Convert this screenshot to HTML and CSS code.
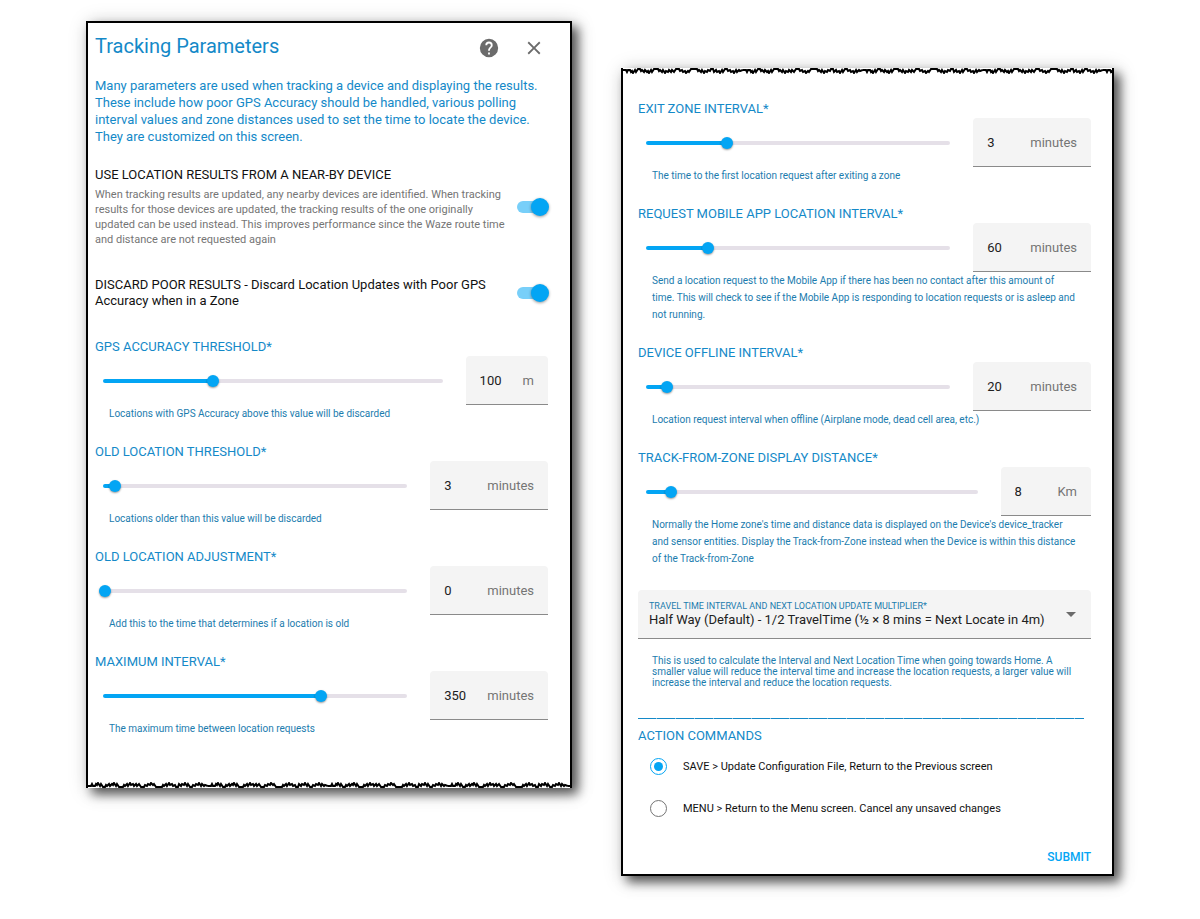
FILE: index.html
```html
<!DOCTYPE html>
<html lang="en">
<head>
<meta charset="utf-8">
<meta name="viewport" content="width=device-width, initial-scale=1">
<title>Tracking Parameters</title>
<link rel="stylesheet" href="styles.css">
</head>
<body>
<form class="page">
  <section class="panel panel-first">
    <header class="head">
      <h1 class="title">Tracking Parameters</h1>
      <button class="icon-btn" type="button" aria-label="Help">
        <svg width="22" height="22" viewBox="0 0 24 24" fill="#6b6b6b"><path d="M15.07 11.25l-.9.92C13.45 12.89 13 13.5 13 15h-2v-.5c0-1.11.45-2.11 1.17-2.83l1.24-1.26c.37-.36.59-.86.59-1.41a2 2 0 0 0-4 0H8a4 4 0 0 1 8 0c0 .88-.36 1.67-.93 2.25M13 19h-2v-2h2M12 2a10 10 0 1 0 0 20 10 10 0 0 0 0-20z"/></svg>
      </button>
      <button class="icon-btn" type="button" aria-label="Close">
        <svg width="22" height="22" viewBox="0 0 24 24" fill="#6b6b6b"><path d="M19 6.41L17.59 5 12 10.59 6.41 5 5 6.41 10.59 12 5 17.59 6.41 19 12 13.41 17.59 19 19 17.59 13.41 12z"/></svg>
      </button>
    </header>
    <p class="intro">Many parameters are used when tracking a device and displaying the results. These include how poor GPS Accuracy should be handled, various polling interval values and zone distances used to set the time to locate the device. They are customized on this screen.</p>

    <div class="toggle">
      <div class="toggle-text">
        <label class="toggle-label" for="nearby">USE LOCATION RESULTS FROM A NEAR-BY DEVICE</label>
        <p class="toggle-desc">When tracking results are updated, any nearby devices are identified. When tracking results for those devices are updated, the tracking results of the one originally updated can be used instead. This improves performance since the Waze route time and distance are not requested again</p>
      </div>
      <input class="switch" type="checkbox" id="nearby" checked>
    </div>
    <div class="toggle">
      <div class="toggle-text">
        <label class="toggle-label" for="discard">DISCARD POOR RESULTS - Discard Location Updates with Poor GPS<br>Accuracy when in a Zone</label>
      </div>
      <input class="switch" type="checkbox" id="discard" checked>
    </div>

    <div class="field">
      <label class="field-label" for="gps">GPS ACCURACY THRESHOLD*</label>
      <div class="row">
        <div class="slider" style="--fill:.3226"><input type="range" aria-label="GPS accuracy threshold" min="0" max="310" value="100"></div>
        <div class="box"><input class="num" id="gps" type="text" value="100"><span class="unit">m</span></div>
      </div>
      <p class="helper">Locations with GPS Accuracy above this value will be discarded</p>
    </div>
    <div class="field">
      <label class="field-label" for="old">OLD LOCATION THRESHOLD*</label>
      <div class="row">
        <div class="slider" style="--fill:.0333"><input type="range" aria-label="Old location threshold" min="0" max="90" value="3"></div>
        <div class="box"><input class="num" id="old" type="text" value="3"><span class="unit">minutes</span></div>
      </div>
      <p class="helper">Locations older than this value will be discarded</p>
    </div>
    <div class="field">
      <label class="field-label" for="adj">OLD LOCATION ADJUSTMENT*</label>
      <div class="row">
        <div class="slider" style="--fill:0"><input type="range" aria-label="Old location adjustment" min="0" max="60" value="0"></div>
        <div class="box"><input class="num" id="adj" type="text" value="0"><span class="unit">minutes</span></div>
      </div>
      <p class="helper">Add this to the time that determines if a location is old</p>
    </div>
    <div class="field">
      <label class="field-label" for="max">MAXIMUM INTERVAL*</label>
      <div class="row">
        <div class="slider" style="--fill:.7204"><input type="range" aria-label="Maximum interval" min="15" max="480" value="350"></div>
        <div class="box"><input class="num" id="max" type="text" value="350"><span class="unit">minutes</span></div>
      </div>
      <p class="helper">The maximum time between location requests</p>
    </div>
    <svg class="torn torn-bottom" width="100%" height="6" aria-hidden="true">
      <defs>
        <pattern id="rip" width="120" height="6" patternUnits="userSpaceOnUse">
          <path fill="none" stroke="#000" stroke-width="2" d="M0 4H3L4 2L5 4H7L8 2L9 3L10 1L12 4L13 2L15 5H17L18 3L19 4L21 2L22 4L24 2L25 3L26 1L28 4L29 2L31 5H35L36 3L37 4L39 2L40 4L42 1L43 3L45 2L46 4L48 2L49 4L51 2L53 5H56L57 3L59 4L60 2L62 3L63 1L65 3L66 2L68 5H74L75 3L76 4L78 2L79 4L81 1L82 3L84 2L85 4L87 3L88 5H90L91 2L93 4L94 2L96 3L97 1L99 4L100 2L102 5H104L105 3L107 4L108 2L110 3L111 1L113 4L114 2L116 4L117 3L120 4"/>
        </pattern>
      </defs>
      <rect width="100%" height="6" fill="url(#rip)"/>
    </svg>
  </section>

  <section class="panel panel-second">
    <svg class="torn torn-top" width="100%" height="6" aria-hidden="true">
      <rect width="100%" height="6" fill="url(#rip)"/>
    </svg>
    <div class="field">
      <label class="field-label" for="exit">EXIT ZONE INTERVAL*</label>
      <div class="row">
        <div class="slider" style="--fill:.2632"><input type="range" aria-label="Exit zone interval" min="0.5" max="10" step="0.5" value="3"></div>
        <div class="box"><input class="num" id="exit" type="text" value="3"><span class="unit">minutes</span></div>
      </div>
      <p class="helper">The time to the first location request after exiting a zone</p>
    </div>
    <div class="field">
      <label class="field-label" for="app">REQUEST MOBILE APP LOCATION INTERVAL*</label>
      <div class="row">
        <div class="slider" style="--fill:.2"><input type="range" aria-label="Request mobile app location interval" min="0" max="300" value="60"></div>
        <div class="box"><input class="num" id="app" type="text" value="60"><span class="unit">minutes</span></div>
      </div>
      <p class="helper">Send a location request to the Mobile App if there has been no contact after this amount of<br>time. This will check to see if the Mobile App is responding to location requests or is asleep and<br>not running.</p>
    </div>
    <div class="field">
      <label class="field-label" for="offline">DEVICE OFFLINE INTERVAL*</label>
      <div class="row">
        <div class="slider" style="--fill:.0635"><input type="range" aria-label="Device offline interval" min="1" max="300" value="20"></div>
        <div class="box"><input class="num" id="offline" type="text" value="20"><span class="unit">minutes</span></div>
      </div>
      <p class="helper">Location request interval when offline (Airplane mode, dead cell area, etc.)</p>
    </div>
    <div class="field">
      <label class="field-label" for="dist">TRACK-FROM-ZONE DISPLAY DISTANCE*</label>
      <div class="row">
        <div class="slider" style="--fill:.0707"><input type="range" aria-label="Track-from-zone display distance" min="1" max="100" value="8"></div>
        <div class="box"><input class="num" id="dist" type="text" value="8"><span class="unit">Km</span></div>
      </div>
      <p class="helper">Normally the Home zone's time and distance data is displayed on the Device's device_tracker<br>and sensor entities. Display the Track-from-Zone instead when the Device is within this distance<br>of the Track-from-Zone</p>
    </div>

    <div class="select-box">
      <label class="select-label" for="mult">TRAVEL TIME INTERVAL AND NEXT LOCATION UPDATE MULTIPLIER*</label>
      <select class="select" id="mult"><option>Half Way (Default) - 1/2 TravelTime (½ × 8 mins = Next Locate in 4m)</option></select>
      <svg class="caret" width="10" height="5" viewBox="0 0 10 5" fill="#6b6b6b" aria-hidden="true"><path d="M0 0h10L5 5z"/></svg>
    </div>
    <p class="helper helper-tight">This is used to calculate the Interval and Next Location Time when going towards Home. A smaller value will reduce the interval time and increase the location requests, a larger value will increase the interval and reduce the location requests.</p>

    <hr class="rule">
    <fieldset class="actions">
      <legend class="field-label">ACTION COMMANDS</legend>
      <label class="choice"><input class="radio" type="radio" name="action" checked>SAVE &gt; Update Configuration File, Return to the Previous screen</label>
      <label class="choice"><input class="radio" type="radio" name="action">MENU &gt; Return to the Menu screen. Cancel any unsaved changes</label>
    </fieldset>
    <button class="submit" type="button">SUBMIT</button>
  </section>
</form>
</body>
</html>
```
FILE: styles.css
```css
* {
  box-sizing: border-box;
}

body {
  margin: 0;
  background: #fff;
  color: #212121;
  font-family: Roboto, "Liberation Sans", sans-serif;
  font-size: 13px;
}

h1, p {
  margin: 0;
  font-weight: 400;
}

input, select, button {
  margin: 0;
  font: inherit;
  color: inherit;
}

.page {
  display: grid;
  grid-template-columns: 486fr 493fr;
  gap: 49px;
  align-items: start;
  padding: 21px 86px 40px;
}

.panel {
  display: flex;
  flex-direction: column;
  border: 2px solid #000;
  background: #fff;
  box-shadow: 6px 6px 10px rgba(0, 0, 0, .6), 3px 3px 18px rgba(0, 0, 0, .25);
}

.panel-first {
  padding: 0 22px 0 7px;
  border-bottom: 0;
}

.panel-second {
  margin-top: 47px;
  padding: 0 21px 7px 15px;
  border-top: 0;
}

.torn {
  display: block;
}

.torn-bottom {
  width: calc(100% + 29px);
  margin: 24px -22px 0 -7px;
}

.torn-top {
  width: calc(100% + 36px);
  margin: 0 -21px 26px -15px;
  transform: scaleY(-1);
}

.head {
  display: flex;
  align-items: center;
  gap: 23px;
  height: 50px;
  padding-right: 3px;
  margin-bottom: 4px;
}

.title {
  flex: 1;
  padding-bottom: 4px;
  color: #1489c8;
  font-size: 20px;
  line-height: 24px;
}

.icon-btn {
  display: flex;
  padding: 0;
  border: 0;
  background: none;
}

.intro {
  color: #1489c8;
  line-height: 17px;
}

.toggle {
  display: flex;
  align-items: center;
  justify-content: space-between;
  gap: 6px;
  margin-top: 22px;
}

.toggle + .toggle {
  margin: 30px 0 29px;
}

.toggle-text {
  flex: 1;
}

.toggle-label {
  display: block;
  color: #111;
  line-height: 16px;
}

.toggle-desc {
  margin-top: 4px;
  color: #757575;
  font-size: 11px;
  line-height: 15px;
}

.switch {
  appearance: none;
  display: grid;
  align-items: center;
  flex: none;
  width: 32px;
  height: 18px;
}

.toggle .switch {
  margin-right: -1px;
}

.switch::before,
.switch::after {
  content: "";
  grid-area: 1 / 1;
}

.switch::before {
  height: 12px;
  margin-right: 2px;
  border-radius: 6px;
  background: #78cff9;
}

.switch::after {
  justify-self: end;
  width: 18px;
  height: 18px;
  border-radius: 50%;
  background: #03a5f4;
  box-shadow: 0 1px 3px rgba(0, 0, 0, .4);
}

.field {
  margin-bottom: 21px;
}

.field-label {
  display: block;
  color: #1489c8;
  line-height: 18px;
}

.row {
  display: flex;
  align-items: center;
  gap: 19px;
  padding-left: 4px;
}

.slider {
  flex: 1;
  display: grid;
  align-items: center;
}

.slider::before {
  content: "";
  grid-area: 1 / 1;
  height: 4px;
  margin: 0 4px;
  border-radius: 2px;
  background: linear-gradient(to right, #03a5f4 calc(var(--fill) * (100% - 4px) + 2px), #e5e0e8 0);
}

.slider input {
  appearance: none;
  grid-area: 1 / 1;
  width: 100%;
  height: 12px;
  background: transparent;
}

.slider input::-webkit-slider-thumb {
  appearance: none;
  width: 12px;
  height: 12px;
  border-radius: 50%;
  background: #03a5f4;
  box-shadow: 0 1px 2px rgba(0, 0, 0, .4);
}

.box {
  display: flex;
  align-items: center;
  height: 49px;
  padding: 0 14px;
  border-bottom: 1px solid #8a8a8a;
  border-radius: 4px 4px 0 0;
  background: #f4f4f4;
}

.num {
  width: 43px;
  padding: 0;
  border: 0;
  background: none;
}

.unit {
  color: #757575;
}

.helper {
  padding-left: 14px;
  color: #1b7cae;
  font-size: 10px;
  line-height: 17px;
}

.helper-tight {
  margin-top: 16px;
  padding-right: 14px;
  line-height: 11px;
}

.select-box {
  display: grid;
  grid-template-columns: 1fr auto;
  align-content: center;
  align-items: center;
  height: 49px;
  margin-top: 2px;
  padding: 0 15px 0 11px;
  border-bottom: 1px solid #8a8a8a;
  border-radius: 4px 4px 0 0;
  background: #f4f4f4;
}

.select-label {
  color: #1b7cae;
  font-size: 9px;
  line-height: 11px;
}

.select {
  appearance: none;
  grid-area: 2 / 1;
  padding: 0;
  border: 0;
  background: none;
  line-height: 16px;
}

.caret {
  grid-area: 1 / 2 / 3 / 3;
}

.rule {
  width: calc(100% - 7px);
  height: 1px;
  margin: 30px 7px 8px 0;
  border: 0;
  background: #1489c8 linear-gradient(to right, transparent 18px, rgba(255, 255, 255, .5) 0) 0 0 / 19px 1px;
}

.actions {
  display: grid;
  margin: 0;
  padding: 0;
  border: 0;
}

.actions .field-label {
  padding: 0;
}

.choice {
  display: flex;
  align-items: center;
  gap: 16px;
  height: 42px;
  padding-left: 12px;
  color: #111;
  font-size: 11px;
}

.radio {
  appearance: none;
  display: grid;
  place-items: center;
  width: 17px;
  height: 17px;
  border: 1px solid #757575;
  border-radius: 50%;
}

.radio:checked {
  border-color: #03a5f4;
}

.radio:checked::before {
  content: "";
  width: 9px;
  height: 9px;
  border-radius: 50%;
  background: #03a5f4;
}

.submit {
  align-self: flex-end;
  margin-top: 18px;
  padding: 0;
  border: 0;
  background: none;
  color: #03a5f4;
  font-size: 12px;
  font-weight: 500;
  line-height: 20px;
}
```
